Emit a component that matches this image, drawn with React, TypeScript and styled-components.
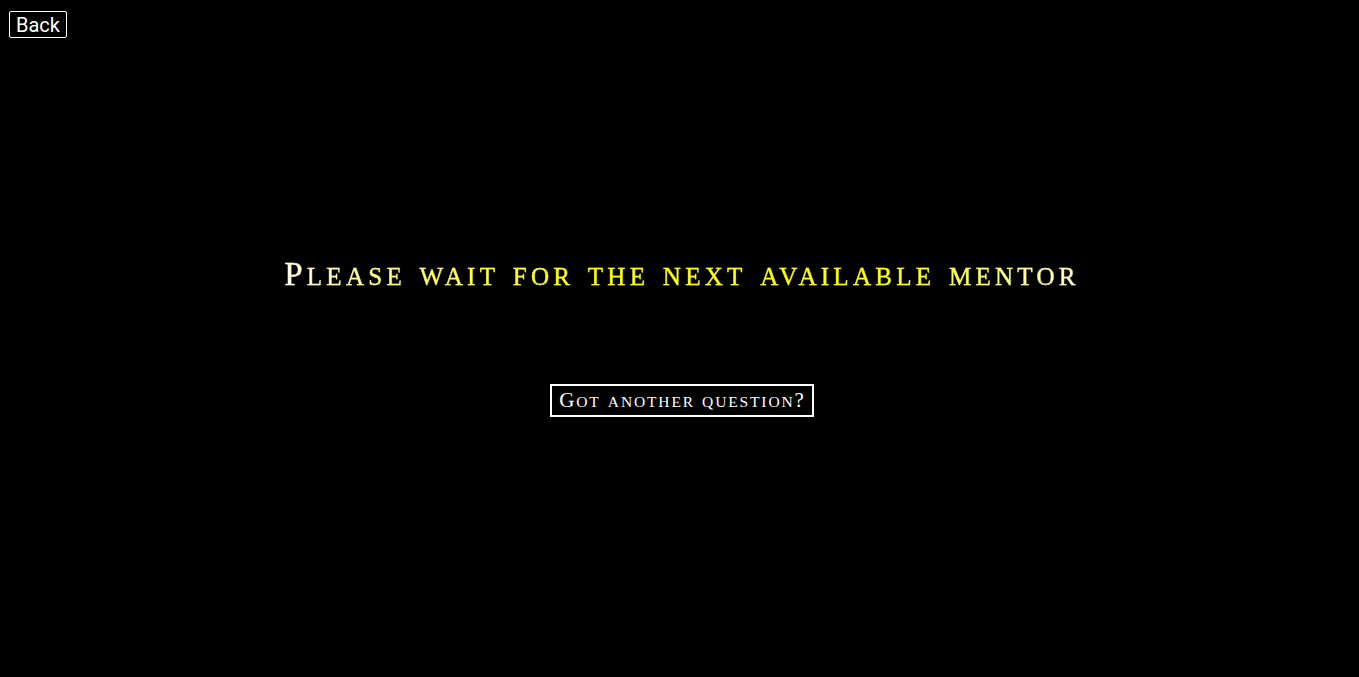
import React from "react";
import styled, { createGlobalStyle } from "styled-components";

const Global = createGlobalStyle`
  html, body { margin: 0; padding: 0; background: #000; }
  body { font-family: "Liberation Serif", serif; }
`;

const Page = styled.div`
  min-height: 677px;
  background: #000;
  display: flex;
  flex-direction: column;
  padding: 10px 9px;
  box-sizing: border-box;
`;

const BackButton = styled.button`
  align-self: flex-start;
  background: #000;
  color: #fff;
  border: 1px solid #fff;
  border-radius: 2px;
  font-family: Roboto, "Liberation Sans", sans-serif;
  font-size: 20px;
  line-height: 24px;
  padding: 0 6px;
  height: 27px;
  margin-top: 1px;
  cursor: pointer;
`;

const Center = styled.main`
  display: flex;
  flex-direction: column;
  align-items: center;
  margin-top: 217px;
  padding-left: 5px;
`;

const Heading = styled.h1`
  margin: 0;
  font-family: "Liberation Serif", serif;
  font-weight: normal;
  font-size: 33px;
  line-height: 38px;
  letter-spacing: 4.25px;
  word-spacing: 1px;
  -webkit-text-stroke: 0.35px rgba(255, 255, 150, 0.55);
  background: linear-gradient(90deg, #fffff0 0%, #ffff70 16%, #ffff00 38%, #ffff00 76%, #ffff90 92%, #ffffd8 100%);
  -webkit-background-clip: text;
  background-clip: text;
  color: transparent;
`;

const Small = styled.span<{ $scale: number }>`
  font-size: ${(p) => p.$scale}em;
  text-transform: uppercase;
`;

const Question = styled.button`
  margin-top: 88px;
  background: #000;
  border: 2px solid #fff;
  color: #fff;
  font-family: "Liberation Serif", serif;
  font-size: 21px;
  line-height: 23px;
  height: 33px;
  letter-spacing: 1.85px;
  padding: 3px 6px 2px 7px;
  cursor: pointer;
`;

function SmallCaps({ text, scale }: { text: string; scale: number }) {
  const parts: React.ReactNode[] = [];
  const re = /([^a-z]+)|([a-z]+)/g;
  let m: RegExpExecArray | null;
  let i = 0;
  while ((m = re.exec(text))) {
    if (m[1]) parts.push(<React.Fragment key={i++}>{m[1]}</React.Fragment>);
    else parts.push(<Small key={i++} $scale={scale}>{m[2]}</Small>);
  }
  return <>{parts}</>;
}

export default function App() {
  return (
    <>
      <Global />
      <Page>
        <BackButton>Back</BackButton>
        <Center>
          <Heading>
            <SmallCaps text="Please wait for the next available mentor" scale={0.76} />
          </Heading>
          <Question>
            <SmallCaps text="Got another question?" scale={0.74} />
          </Question>
        </Center>
      </Page>
    </>
  );
}
